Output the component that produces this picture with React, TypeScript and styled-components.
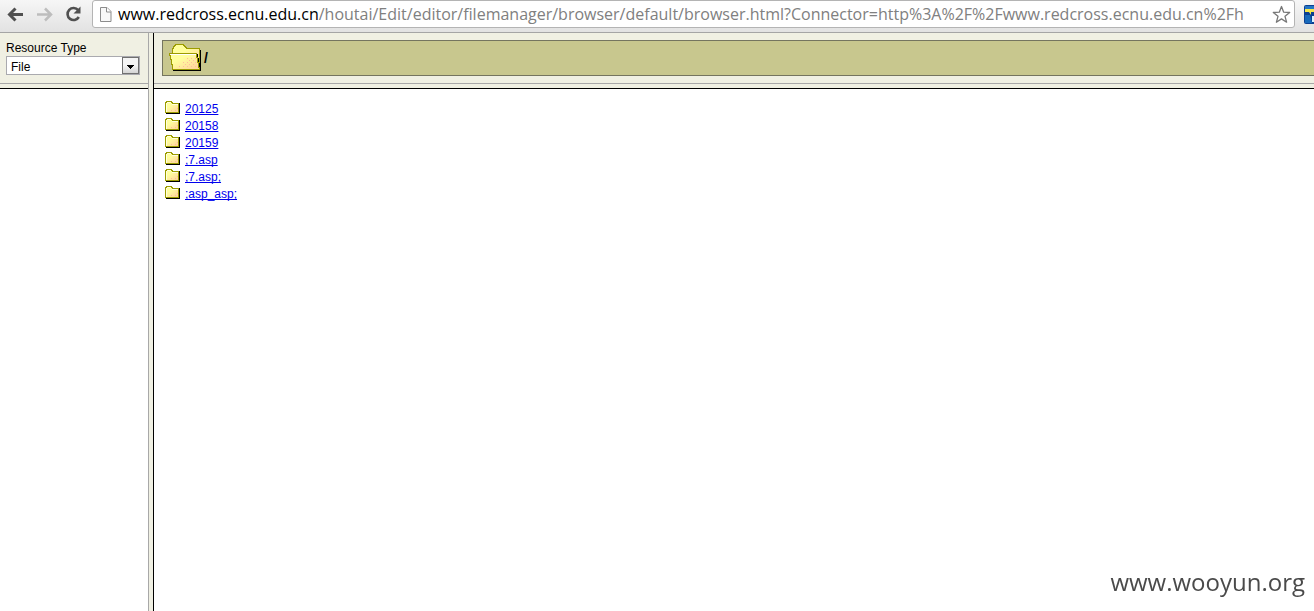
import React from 'react';
import styled, { createGlobalStyle } from 'styled-components';

const GlobalStyle = createGlobalStyle`
  * { box-sizing: border-box; }
  html, body { margin: 0; height: 100%; }
  #root { height: 100%; }
  body {
    background: #fff;
    color: #000;
    font-family: "Liberation Sans", Arial, sans-serif;
    font-size: 12px;
    overflow: hidden;
  }
`;

const Page = styled.div`
  display: flex;
  flex-direction: column;
  height: 100vh;
  overflow: hidden;
`;

const BrowserBar = styled.header`
  display: flex;
  align-items: flex-start;
  flex: none;
  height: 33px;
  border-bottom: 1px solid #a5a5a5;
  background: linear-gradient(#f6f6f6, #e2e2e2);
`;

const NavButtons = styled.nav`
  display: flex;
  gap: 11px;
  padding: 5px 10px 0 6px;
`;

const NavButton = styled.button`
  width: 18px;
  height: 18px;
  padding: 0;
  border: 0;
  background: none;
  svg { display: block; }
`;

const AddressBox = styled.div`
  display: flex;
  align-items: center;
  flex: 1;
  min-width: 0;
  height: 28px;
  padding: 0 3px 0 6px;
  border: 1px solid #b4b4b4;
  border-radius: 3px;
  background: #fff;
  svg { flex: none; }
`;

const Address = styled.div`
  flex: 1;
  min-width: 0;
  margin-left: 6px;
  overflow: hidden;
  white-space: nowrap;
  color: #808080;
  font-family: "Open Sans", "Noto Sans", sans-serif;
  font-size: 16px;
  line-height: 24px;
`;

const Domain = styled.span`
  color: #000;
`;

const Extension = styled.button`
  flex: none;
  width: 10px;
  height: 20px;
  margin: 5px 0 0 9px;
  padding: 0;
  border: 0;
  background: none;
  overflow: hidden;
  svg { display: block; }
`;

const Frames = styled.div`
  display: flex;
  flex: 1;
  min-height: 0;
`;

const Divider = styled.div`
  flex: none;
  width: 6px;
  border-left: 1px solid #a8a8a8;
  border-right: 1px solid #000;
  background: #f0f0e3;
`;

const Sidebar = styled.aside`
  flex: none;
  width: 148px;
`;

const Main = styled.main`
  flex: 1;
  min-width: 0;
`;

const FrameHead = styled.div`
  height: 50px;
  padding: 7px 8px 0 6px;
  background: #f0f0e3;
`;

const PathHead = styled(FrameHead)`
  padding: 7px 0 0 8px;
`;

const FrameRule = styled.div`
  height: 6px;
  border-top: 1px solid #a8a8a8;
  border-bottom: 1px solid #000;
  background: #f0f0e3;
`;

const Label = styled.label`
  display: block;
  line-height: 16px;
`;

const SelectWrap = styled.div`
  display: grid;
  grid-template-columns: 1fr 17px;
  height: 19px;
  border: 1px solid #aaaaaf;
  background: #fff;
`;

const Select = styled.select`
  grid-area: 1 / 1 / 2 / 3;
  appearance: none;
  padding: 2px 20px 0 4px;
  border: 0;
  border-radius: 0;
  background: transparent;
  color: #000;
  font: inherit;
`;

const SelectArrow = styled.span`
  grid-area: 1 / 2;
  border: 1px solid #707070;
  background: linear-gradient(#f4f4f4 50%, #d4d4d4);
  pointer-events: none;
  svg { display: block; }
`;

const PathBar = styled.div`
  display: flex;
  align-items: center;
  gap: 2px;
  height: 36px;
  padding-left: 6px;
  border: 1px solid #75755f;
  border-right: 0;
  background: #c8c78e;
  font-size: 14px;
  font-weight: bold;
`;

const FolderTable = styled.table`
  margin: 11px 0 0 11px;
  border-collapse: collapse;
  td { height: 17px; padding: 0 4px 0 0; line-height: 16px; vertical-align: bottom; }
  td:first-child { vertical-align: top; }
  svg { display: block; }
`;

const FolderLink = styled.a`
  color: #0000ee;
  text-decoration: underline;
  text-decoration-skip-ink: none;
`;

const Watermark = styled.div`
  position: fixed;
  right: 9px;
  bottom: 12px;
  color: #4a4a4a;
  font-family: "Open Sans", "Noto Sans", sans-serif;
  font-size: 24px;
  line-height: 34px;
`;

const folders = ['20125', '20158', '20159', ';7.asp', ';7.asp;', ';asp_asp;'];

const Arrow = ({ color, flip }: { color: string; flip?: boolean }) => (
  <svg width="18" height="18" viewBox="0 0 18 18" fill="none" stroke={color} strokeWidth="3">
    {flip ? <path d="M2 9.500H16M10 3.500l6 6-6 6" strokeWidth="2.500" /> : <path d="M17 9.500H4M9.500 3.500l-6 6 6 6" />}
  </svg>
);

const Reload = () => (
  <svg width="18" height="18" viewBox="0 0 18 18">
    <path d="M14.200 5.200A6 6 0 1 0 14.800 12" fill="none" stroke="#505050" strokeWidth="2.600" />
    <path d="M16.500 1.500v7h-7z" fill="#505050" />
  </svg>
);

const PageIcon = () => (
  <svg width="13" height="17" viewBox="0 0 13 17">
    <path d="M1.500 1.500h6.500l4 4v10H1.500z" fill="#f8f8f8" stroke="#8c8c8c" />
    <path d="M7.500 1.500v4.500h4.500" fill="#fff" stroke="#8c8c8c" />
  </svg>
);

const Star = () => (
  <svg width="19" height="19" viewBox="0 0 19 19">
    <path d="M9.500 1.500l2.200 5.700 6 .300-4.700 3.800 1.600 5.900-5.100-3.300-5.100 3.300L6 11.300 1.300 7.500l6-.300z" fill="#fff" stroke="#777" strokeWidth="1.300" strokeLinejoin="round" />
  </svg>
);

const FolderShades = () => (
  <defs>
    <linearGradient id="folder" x1="0" y1="0" x2="1" y2="1">
      <stop offset="0.350" stopColor="#ffff9c" />
      <stop offset="1" stopColor="#ffce9c" />
    </linearGradient>
    <pattern id="grain" width="4" height="4" patternUnits="userSpaceOnUse">
      <path d="M0 0h1v1H0zM2 2h1v1H2z" fill="#ffbd9c" />
    </pattern>
  </defs>
);

const OpenFolder = () => (
  <svg width="33" height="28" viewBox="0 0 33 28" shapeRendering="crispEdges">
    <FolderShades />
    <path d="M31 6h1v21H4v-1h27z" fill="#000" />
    <path d="M3.500 10V4.500h1v-2h1v-1h1v-1h8v1h1v1h1v1h1v1h13v21h-26z" fill="url(#folder)" stroke="#9c9c00" />
    <path d="M28 10h1v4h1v5h1v6h-1v-5h-1v-5h-1z" fill="#000" />
    <path d="M.500 9.500h27v4h1v5h1v5h1v2h-27v-5h-1v-5h-1v-4h-1z" fill="url(#folder)" stroke="#9c9c00" />
    <path d="M1 10.500h26" stroke="#fff" />
    <path d="M18 13h9l2 11H8v-3h6v-4h4z" fill="url(#grain)" />
  </svg>
);

const Folder = () => (
  <svg width="16" height="15" viewBox="0 0 16 15" shapeRendering="crispEdges">
    <path d="M1 14h14V3h-1v10H1z" fill="#000" />
    <path d="M.500 12.500v-10h1v-1h5v1h1v1h6v9z" fill="url(#folder)" stroke="#9c9c00" />
    <path d="M1.500 3v9M2 2.500h4M7 4.500h6" stroke="#ffffde" />
    <path d="M9 7h4v5H5v-2h4z" fill="url(#grain)" />
  </svg>
);

export default function App() {
  return (
    <Page>
      <GlobalStyle />
      <BrowserBar>
        <NavButtons>
          <NavButton aria-label="Back"><Arrow color="#505050" /></NavButton>
          <NavButton aria-label="Forward" disabled><Arrow color="#bdbdbd" flip /></NavButton>
          <NavButton aria-label="Reload"><Reload /></NavButton>
        </NavButtons>
        <AddressBox>
          <PageIcon />
          <Address>
            <Domain>www.redcross.ecnu.edu.cn</Domain>
            /houtai/Edit/editor/filemanager/browser/default/browser.html?Connector=http%3A%2F%2Fwww.redcross.ecnu.edu.cn%2Fh
          </Address>
          <Star />
        </AddressBox>
        <Extension aria-label="Extension">
          <svg width="20" height="20" viewBox="0 0 20 20">
            <rect width="20" height="19" rx="2" fill="#0b3f91" />
            <path d="M1 1h19v3H1z" fill="#2374c4" />
            <path d="M1 4h19v3H7v3L5 7H1z" fill="#f4e64c" />
            <path d="M1 10h5l2 8H1z" fill="#1769bb" />
            <path d="M8 11h5v6H8z" fill="#d9f3ff" />
          </svg>
        </Extension>
      </BrowserBar>
      <Frames>
        <Sidebar>
          <FrameHead>
            <Label htmlFor="resource-type">Resource Type</Label>
            <SelectWrap>
              <Select id="resource-type" defaultValue="File">
                <option>File</option>
              </Select>
              <SelectArrow>
                <svg width="15" height="15" viewBox="0 0 15 15" shapeRendering="crispEdges">
                  <path d="M4 7h7v1h-1v1H9v1H8v1H7v-1H6V9H5V8H4z" fill="#000" />
                </svg>
              </SelectArrow>
            </SelectWrap>
          </FrameHead>
          <FrameRule />
        </Sidebar>
        <Divider />
        <Main>
          <PathHead>
            <PathBar><OpenFolder />/</PathBar>
          </PathHead>
          <FrameRule />
          <FolderTable>
            <tbody>
              {folders.map((name) => (
                <tr key={name}>
                  <td><Folder /></td>
                  <td><FolderLink href="#">{name}</FolderLink></td>
                </tr>
              ))}
            </tbody>
          </FolderTable>
        </Main>
      </Frames>
      <Watermark>www.wooyun.org</Watermark>
    </Page>
  );
}
